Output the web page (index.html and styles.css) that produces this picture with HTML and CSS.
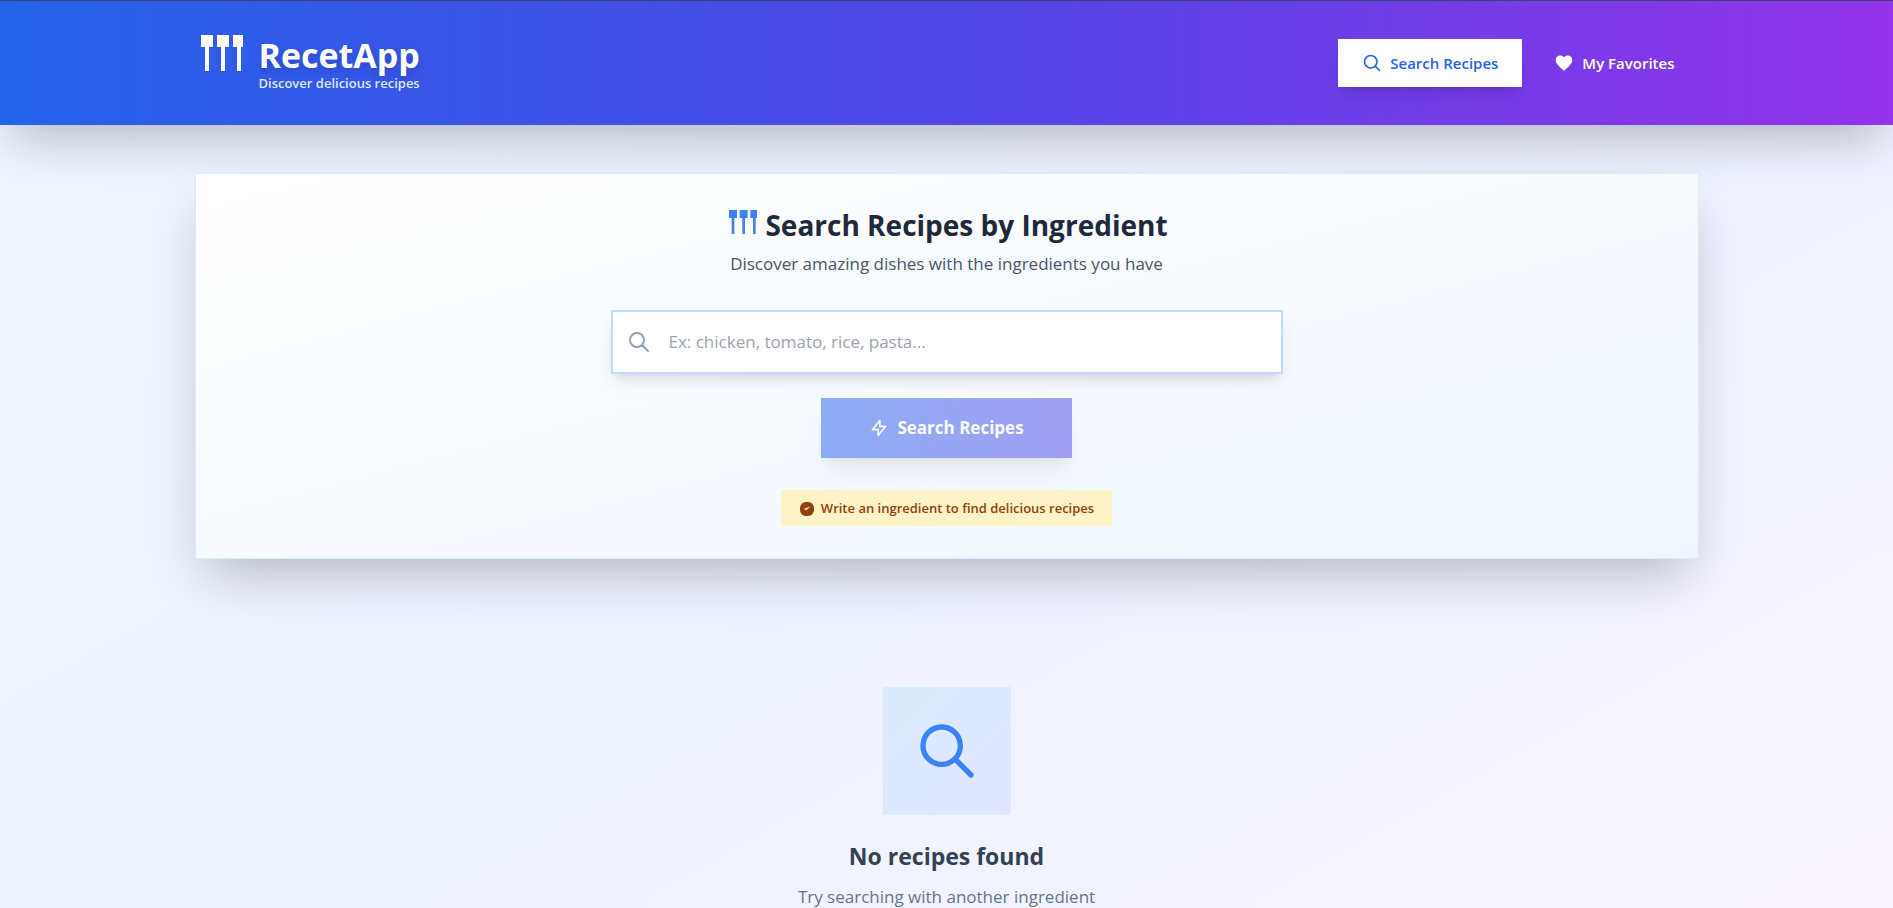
FILE: index.html
```html
<!DOCTYPE html>
<html lang="en">
<head>
<meta charset="utf-8">
<meta name="viewport" content="width=device-width, initial-scale=1">
<title>RecetApp</title>
<link rel="stylesheet" href="styles.css">
</head>
<body>
<header class="site-header">
  <div class="container header-inner">
    <div class="brand">
      <svg class="brand-icon" viewBox="0 0 24 24" fill="currentColor" aria-hidden="true"><path d="M3 3h6v6H7v12H5V9H3zM11 3h6v6h-2v12h-2V9h-2zM19 3h5v6h-1v12h-2V9h-2z"/></svg>
      <div class="brand-text">
        <h1 class="brand-name">RecetApp</h1>
        <p class="brand-tagline">Discover delicious recipes</p>
      </div>
    </div>
    <nav class="nav">
      <button type="button" class="nav-button nav-button-active">
        <svg class="icon-small" viewBox="0 0 24 24" fill="none" stroke="currentColor" stroke-width="2" stroke-linecap="round" stroke-linejoin="round" aria-hidden="true"><path d="M21 21l-5.197-5.197m0 0A7.500 7.500 0 105.196 5.196a7.500 7.500 0 0010.607 10.607z"/></svg>
        Search Recipes
      </button>
      <button type="button" class="nav-button">
        <svg class="icon-small" viewBox="0 0 24 24" fill="currentColor" aria-hidden="true"><path d="M12 21.350l-1.450-1.320C5.400 15.360 2 12.280 2 8.500 2 5.420 4.420 3 7.500 3c1.740 0 3.410.810 4.500 2.090C13.090 3.810 14.760 3 16.500 3 19.580 3 22 5.420 22 8.500c0 3.780-3.400 6.860-8.550 11.540L12 21.350z"/></svg>
        My Favorites
      </button>
    </nav>
  </div>
</header>
<main class="container main">
  <section class="search-card">
    <div class="title-row">
      <svg class="title-icon" viewBox="0 0 24 24" fill="currentColor" aria-hidden="true"><path d="M3 3h6v6H7v12H5V9H3zM11 3h6v6h-2v12h-2V9h-2zM19 3h5v6h-1v12h-2V9h-2z"/></svg>
      <h2 class="title">Search Recipes by Ingredient</h2>
    </div>
    <p class="subtitle">Discover amazing dishes with the ingredients you have</p>
    <form class="search-form">
      <div class="field">
        <svg class="field-icon" viewBox="0 0 24 24" fill="none" stroke="currentColor" stroke-width="2" stroke-linecap="round" stroke-linejoin="round" aria-hidden="true"><path d="M21 21l-6-6m2-5a7 7 0 11-14 0 7 7 0 0114 0z"/></svg>
        <input class="field-input" type="text" aria-label="Ingredient" placeholder="Ex: chicken, tomato, rice, pasta...">
      </div>
      <button type="submit" class="submit" disabled>
        <svg class="icon-small" viewBox="0 0 24 24" fill="none" stroke="currentColor" stroke-width="2" stroke-linecap="round" stroke-linejoin="round" aria-hidden="true"><path d="M13 10V3L4 14h7v7l9-11h-7z"/></svg>
        Search Recipes
      </button>
    </form>
    <p class="hint">
      <svg class="hint-icon" viewBox="0 0 16 16" aria-hidden="true"><rect x="1" y="2" width="14" height="14" rx="6" fill="currentColor"/><path d="M5.500 9l1.500 1 3.500-3-2.500 1z" fill="#fef3c7" stroke="#fef3c7" stroke-width=".6"/></svg>
      Write an ingredient to find delicious recipes
    </p>
  </section>
  <section class="empty">
    <div class="empty-badge">
      <svg class="empty-icon" viewBox="0 0 24 24" fill="none" stroke="currentColor" stroke-width="2" stroke-linecap="round" stroke-linejoin="round" aria-hidden="true"><path d="M21 21l-6-6m2-5a7 7 0 11-14 0 7 7 0 0114 0z"/></svg>
    </div>
    <h3 class="empty-title">No recipes found</h3>
    <p class="empty-text">Try searching with another ingredient</p>
  </section>
</main>
</body>
</html>
```
FILE: styles.css
```css
*, *::before, *::after { box-sizing: border-box; }
body, h1, h2, h3, p { margin: 0; }
html { scrollbar-width: none; }
body {
  min-height: 100vh;
  font-family: "Segoe UI", "Open Sans", "Noto Sans", sans-serif;
  font-size: 15px;
  line-height: 24px;
  color: #1e293b;
  background: linear-gradient(to bottom right, #eff6ff, #eef2ff 50%, #faf5ff);
}
svg { display: block; flex-shrink: 0; }
button, input { font: inherit; }
.container { width: 100%; max-width: 1536px; margin: 0 auto; padding: 0 16px; }
.site-header {
  border-top: 1px solid #3b4574;
  color: #fff;
  background: linear-gradient(to right, #2563eb, #4f46e5 50%, #9333ea);
  box-shadow: 0 25px 50px -12px rgba(0, 0, 0, .25);
}
.header-inner { display: flex; align-items: center; justify-content: space-between; padding-top: 28px; padding-bottom: 28px; }
.brand { display: flex; align-items: flex-start; gap: 16px; }
.brand-icon { width: 48px; height: 48px; }
.brand-text { padding: 8px 0 4px; }
.brand-name { font-size: 34px; line-height: 36px; font-weight: 700; text-shadow: 0 4px 8px rgba(0, 0, 0, .15); }
.brand-tagline { font-size: 13px; line-height: 20px; font-weight: 600; color: #dbeafe; }
.nav { display: flex; gap: 8px; }
.nav-button {
  display: flex; align-items: center; gap: 8px;
  padding: 12px 24px; border: 0; background: none; color: #fff;
  font-weight: 600; line-height: 24px;
}
.nav-button-active { background: #fff; color: #2563eb; box-shadow: 0 10px 15px -3px rgba(0, 0, 0, .1), 0 4px 6px -4px rgba(0, 0, 0, .1); }
.icon-small { width: 20px; height: 20px; }
.main { padding-top: 48px; padding-bottom: 48px; }
.search-card {
  display: flex; flex-direction: column; align-items: center;
  padding: 32px; border: 1px solid #dbeafe;
  background: linear-gradient(to bottom right, #fff, #eff6ff);
  box-shadow: 0 25px 50px -12px rgba(0, 0, 0, .25);
}
.title-row { display: flex; align-items: flex-start; gap: 8px; }
.title-icon { width: 32px; height: 32px; color: #3b82f6; }
.title { font-size: 28px; line-height: 38px; font-weight: 700; }
.subtitle { margin-top: 6px; font-size: 17px; line-height: 28px; color: #475569; }
.search-form { display: flex; flex-direction: column; align-items: center; gap: 24px; width: 100%; margin-top: 32px; }
.field {
  display: flex; align-items: center; gap: 18px;
  width: 100%; max-width: 672px; height: 64px; padding: 0 16px 0 14px;
  border: 2px solid #bfdbfe; background: #fff;
  box-shadow: 0 10px 15px -3px rgba(0, 0, 0, .1), 0 4px 6px -4px rgba(0, 0, 0, .1);
}
.field-icon { width: 24px; height: 24px; color: #94a3b8; }
.field-input { flex: 1; min-width: 0; padding: 0; border: 0; outline: 0; background: none; font-size: 17px; line-height: 28px; color: #1e293b; }
.field-input::placeholder { color: #9ca3af; opacity: 1; }
.submit {
  display: flex; align-items: center; gap: 8px;
  padding: 16px 48px; border: 0; opacity: .5; color: #fff;
  font-size: 17px; line-height: 28px; font-weight: 700;
  background: linear-gradient(to right, #2563eb, #4f46e5);
  box-shadow: 0 20px 25px -5px rgba(0, 0, 0, .1), 0 8px 10px -6px rgba(0, 0, 0, .1);
}
.hint {
  display: flex; align-items: center; gap: 6px;
  margin-top: 32px; padding: 8px 18px;
  font-size: 13px; line-height: 20px; font-weight: 600;
  color: #92400e; background: #fef3c7;
}
.hint-icon { width: 16px; height: 16px; }
.empty { display: flex; flex-direction: column; align-items: center; padding: 128px 16px 96px; }
.empty-badge { display: grid; place-items: center; width: 128px; height: 128px; background: linear-gradient(to bottom right, #dbeafe, #e0e7ff); }
.empty-icon { width: 64px; height: 64px; color: #3b82f6; }
.empty-title { margin-top: 24px; font-size: 23px; line-height: 34px; font-weight: 700; color: #334155; }
.empty-text { margin-top: 10px; font-size: 17px; line-height: 28px; color: #64748b; }
```
